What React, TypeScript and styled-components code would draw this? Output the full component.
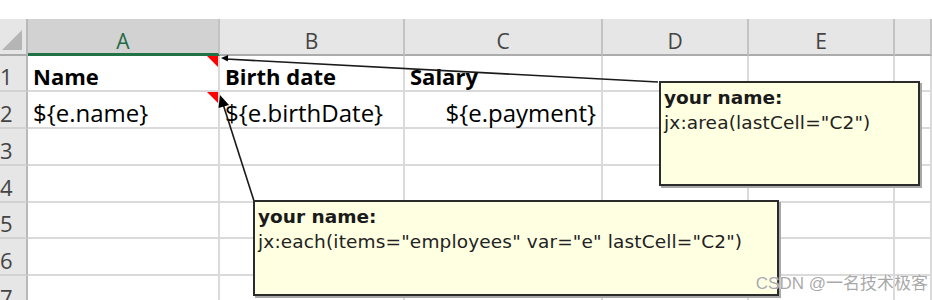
import React from "react";
import styled, { createGlobalStyle } from "styled-components";

const Global = createGlobalStyle`
  html, body { margin: 0; padding: 0; background: #ffffff; }
  body { width: 932px; height: 300px; overflow: hidden; }
`;

const Page = styled.div`
  position: relative;
  width: 932px;
  height: 300px;
  overflow: hidden;
  box-sizing: border-box;
  padding-top: 19px;
  background: #ffffff;
`;

const Sheet = styled.div`
  display: grid;
  grid-template-columns: 28px 192px 185px 198px 146px 146px 1fr;
  grid-template-rows: 37px 36px 37px 37px 37px 36px 37px 37px;
  font-family: "Open Sans", "Liberation Sans", sans-serif;
`;

const Corner = styled.div`
  box-sizing: border-box;
  background: #e6e6e6;
  border-right: 2px solid #b9b9b9;
  border-bottom: 2px solid #ababab;
  display: flex;
  align-items: flex-end;
  justify-content: flex-end;
  padding: 0 4px 4px 0;
`;

const ColHeader = styled.div<{ $selected?: boolean }>`
  box-sizing: border-box;
  background: ${(p) => (p.$selected ? "#d2d2d2" : "#e6e6e6")};
  border-right: 2px solid #c3c3c3;
  border-bottom: ${(p) => (p.$selected ? "3px solid #217346" : "2px solid #ababab")};
  color: ${(p) => (p.$selected ? "#1e6b45" : "#444444")};
  font-size: 21px;
  line-height: 24px;
  display: flex;
  align-items: flex-end;
  justify-content: center;
  padding-bottom: ${(p) => (p.$selected ? "0px" : "1px")};
`;

const RowHeader = styled.div`
  box-sizing: border-box;
  background: #e6e6e6;
  border-right: 2px solid #b9b9b9;
  border-bottom: 2px solid #d2d2d2;
  color: #444444;
  font-size: 22px;
  line-height: 24px;
  display: flex;
  align-items: flex-end;
  padding-bottom: 2px;
  padding-left: 0;
  overflow: hidden;
`;

const Cell = styled.div<{ $bold?: boolean; $right?: boolean; $note?: boolean }>`
  position: relative;
  box-sizing: border-box;
  border-right: 2px solid #dadada;
  border-bottom: 2px solid #dadada;
  color: #000000;
  font-size: ${(p) => (p.$bold ? "22px" : "24px")};
  line-height: 24px;
  font-weight: ${(p) => (p.$bold ? 700 : 400)};
  display: flex;
  align-items: flex-end;
  justify-content: ${(p) => (p.$right ? "flex-end" : "flex-start")};
  padding: 0 5px 2px 5px;
  white-space: nowrap;
  overflow: visible;
  &::after {
    content: "";
    display: ${(p) => (p.$note ? "block" : "none")};
    position: absolute;
    top: 0;
    right: 0;
    width: 0;
    height: 0;
    border-top: 11px solid #ff0000;
    border-left: 11px solid transparent;
  }
`;

const Note = styled.div<{ $x: number; $y: number; $w: number; $h: number }>`
  position: absolute;
  left: ${(p) => p.$x}px;
  top: ${(p) => p.$y}px;
  width: ${(p) => p.$w}px;
  height: ${(p) => p.$h}px;
  box-sizing: border-box;
  background: #ffffe1;
  border: 2px solid #2b2b2b;
  box-shadow: 2px 2px 0 #a8a8a8;
  padding: 2px 3px;
  font-family: "DejaVu Sans", "Liberation Sans", sans-serif;
  font-size: 18.5px;
  letter-spacing: 0.15px;
  line-height: 25px;
  color: #111111;
  white-space: nowrap;
`;

const NoteAuthor = styled.div`
  font-weight: 700;
  letter-spacing: 0;
  color: #1a1a1a;
`;

const NoteText = styled.div`
  color: #222222;
`;

const Arrows = styled.svg`
  position: absolute;
  left: 0;
  top: 0;
  pointer-events: none;
`;

const Watermark = styled.div`
  position: absolute;
  right: 4px;
  bottom: 6px;
  font-family: "Liberation Sans", "Noto Sans CJK SC", sans-serif;
  font-size: 17px;
  line-height: 20px;
  color: rgba(140, 140, 140, 0.75);
  text-shadow: 0 0 2px #ffffff, 0 0 1px #ffffff;
  white-space: nowrap;
`;

const cols = ["A", "B", "C", "D", "E", ""];

const rowContent: Record<number, { text: string; bold?: boolean; right?: boolean; note?: boolean }[]> = {
  1: [
    { text: "Name", bold: true, note: true },
    { text: "Birth date", bold: true },
    { text: "Salary", bold: true },
  ],
  2: [
    { text: "${e.name}", note: true },
    { text: "${e.birthDate}" },
    { text: "${e.payment}", right: true },
  ],
};

const rowNumbers = [1, 2, 3, 4, 5, 6, 7];

export default function App() {
  return (
    <>
      <Global />
      <Page>
        <Sheet>
          <Corner>
            <svg width="20" height="20" viewBox="0 0 20 20">
              <polygon points="20,0 20,20 0,20" fill="#b5b5b5" />
            </svg>
          </Corner>
          {cols.map((c, i) => (
            <ColHeader key={"h" + i} $selected={c === "A"}>
              {c}
            </ColHeader>
          ))}

          {rowNumbers.map((n) => {
            const content = rowContent[n] || [];
            return (
              <React.Fragment key={n}>
                <RowHeader>{n}</RowHeader>
                {cols.map((_, ci) => {
                  const c = content[ci];
                  return (
                    <Cell key={ci} $bold={c?.bold} $right={c?.right} $note={c?.note}>
                      {c?.text}
                    </Cell>
                  );
                })}
              </React.Fragment>
            );
          })}
        </Sheet>

        <Arrows width="932" height="300" viewBox="0 0 932 300">
          <line x1="658" y1="82" x2="226" y2="59" stroke="#1a1a1a" strokeWidth="1.6" />
          <polygon points="221,58 228.2,55 227.8,61.6" fill="#000" />
          <line x1="254" y1="201" x2="223" y2="104" stroke="#1a1a1a" strokeWidth="1.6" />
          <polygon points="220,95 229,105 218.5,108" fill="#000" />
        </Arrows>

        <Note $x={659} $y={81} $w={261} $h={105}>
          <NoteAuthor>your name:</NoteAuthor>
          <NoteText>jx:area(lastCell="C2")</NoteText>
        </Note>
        <Note $x={253} $y={200} $w={526} $h={96}>
          <NoteAuthor>your name:</NoteAuthor>
          <NoteText>jx:each(items="employees" var="e" lastCell="C2")</NoteText>
        </Note>

        <Watermark>CSDN @一名技术极客</Watermark>
      </Page>
    </>
  );
}
